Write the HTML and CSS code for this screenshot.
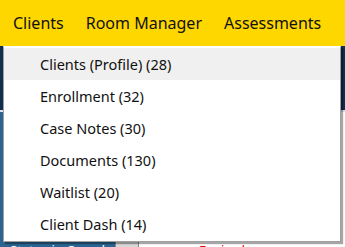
FILE: index.html
```html
<!DOCTYPE html>
<html lang="en">

<head>
    <meta charset="UTF-8">
    <meta name="viewport" content="width=device-width, initial-scale=1.0">
    <title>Clients Menu</title>
    <link rel="stylesheet" href="styles.css">
</head>

<body>
    <nav class="topbar">
        <div class="tab tab-open">Clients</div>
        <div class="tab">Room Manager</div>
        <div class="tab">Assessments</div>
    </nav>

    <div class="page">
        <div class="hero"></div>
        <div class="content">
            <div class="side"></div>
            <div class="main"></div>
        </div>
        <div class="status-row">
            <div class="status-cell">Status in Canada</div>
            <div class="gap-cell"></div>
            <div class="note-cell">Expired</div>
        </div>
    </div>

    <ul class="dropdown">
        <li class="item active">Clients (Profile) (28)</li>
        <li class="item">Enrollment (32)</li>
        <li class="item">Case Notes (30)</li>
        <li class="item">Documents (130)</li>
        <li class="item">Waitlist (20)</li>
        <li class="item">Client Dash (14)</li>
    </ul>
</body>

</html>
```

FILE: styles.css
```css
* {
    margin: 0;
    padding: 0;
    box-sizing: border-box;
}

body {
    font-family: 'Noto Sans', 'Open Sans', sans-serif;
    width: 345px;
    height: 247px;
    overflow: hidden;
    position: relative;
    background: #ffffff;
}

.topbar {
    display: flex;
    height: 46px;
    background: #ffd700;
    white-space: nowrap;
}

.tab {
    padding: 0 11px;
    line-height: 46px;
    font-size: 16px;
    color: #111;
}

.tab-open {
    padding-left: 13px;
}

.page {
    display: flex;
    flex-direction: column;
    height: 201px;
}

.hero {
    height: 66px;
    background: #0e2f4e;
    border-bottom: 2px solid #d8e2ee;
}

.content {
    flex: 1;
    display: flex;
    background: #ffffff;
}

.side {
    width: 115px;
    background: #2a6592;
}

.main {
    flex: 1;
    background: #ffffff;
}

.status-row {
    display: flex;
    height: 6px;
    overflow: hidden;
    font-size: 13px;
    white-space: nowrap;
}

.status-cell {
    width: 115px;
    background: #2a6592;
    color: #ffffff;
    padding-left: 10px;
    line-height: 18px;
}

.gap-cell {
    width: 24px;
    background: #d6d6d6;
    border-left: 1px solid #888;
    border-right: 1px solid #888;
}

.note-cell {
    flex: 1;
    color: #e00000;
    padding-left: 60px;
    line-height: 18px;
}

/* dropdown under the Clients tab */
.dropdown {
    position: absolute;
    top: 46px;
    left: 3px;
    width: 338px;
    height: 196px;
    list-style: none;
    background: #ffffff;
    border: 1px solid #a0a0a0;
    border-top-color: #ffffff;
    box-shadow: 2px 2px 1px rgba(0, 0, 0, 0.35);
    padding: 1px 0;
}

.item {
    height: 32px;
    line-height: 32px;
    padding-left: 36px;
    font-size: 14.5px;
    color: #111;
}

.item.active {
    background: #f0f0f0;
}
```
